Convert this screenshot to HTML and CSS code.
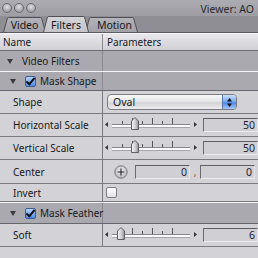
FILE: index.html
```html
<!DOCTYPE html>
<html>
<head>
    <title>Viewer: AO</title>
    <link rel="stylesheet" href="styles.css">
</head>
<body>
<div class="window">
    <div class="titlebar">
        <div class="lights"><span></span><span></span><span></span></div>
        <div class="title">Viewer: AO</div>
    </div>

    <div class="tabs">
        <div class="tab tab-video"><span>Video</span></div>
        <div class="tab tab-filters active"><span>Filters</span></div>
        <div class="tab tab-motion"><span>Motion</span></div>
    </div>

    <div class="sheet">
        <div class="row head">
            <div class="name">Name</div>
            <div class="param">Parameters</div>
        </div>

        <div class="row group top">
            <div class="name"><span class="tri"></span>Video Filters</div>
            <div class="param"></div>
        </div>

        <div class="row group">
            <div class="name sub"><span class="tri"></span><span class="check on"></span>Mask Shape</div>
            <div class="param"></div>
        </div>

        <div class="row item">
            <div class="name">Shape</div>
            <div class="param">
                <div class="popup">
                    <span class="popup-label">Oval</span>
                    <span class="popup-arrows">
                        <svg width="13" height="13" viewBox="0 0 13 13">
                            <polygon points="6.5,2 9,5.5 4,5.5" fill="#111"/>
                            <polygon points="6.5,11 9,7.5 4,7.5" fill="#111"/>
                        </svg>
                    </span>
                </div>
            </div>
        </div>

        <div class="row item">
            <div class="name">Horizontal Scale</div>
            <div class="param slider-cell">
                <svg class="slider" width="94" height="22" viewBox="0 0 94 22">
                    <use href="#slider-base"/>
                    <use href="#thumb" x="27"/>
                </svg>
                <div class="field">50</div>
            </div>
        </div>

        <div class="row item">
            <div class="name">Vertical Scale</div>
            <div class="param slider-cell">
                <svg class="slider" width="94" height="22" viewBox="0 0 94 22">
                    <use href="#slider-base"/>
                    <use href="#thumb" x="27"/>
                </svg>
                <div class="field">50</div>
            </div>
        </div>

        <div class="row item tall">
            <div class="name">Center</div>
            <div class="param center-cell">
                <svg class="plus" width="14" height="14" viewBox="0 0 14 14">
                    <defs>
                        <radialGradient id="knob" cx="50%" cy="40%" r="60%">
                            <stop offset="0" stop-color="#f4f4f6"/>
                            <stop offset="1" stop-color="#b4b4ba"/>
                        </radialGradient>
                    </defs>
                    <circle cx="7" cy="7" r="6.2" fill="url(#knob)" stroke="#6c6c72" stroke-width="0.9"/>
                    <path d="M7 3.6v6.8M3.6 7h6.8" stroke="#222" stroke-width="1.1"/>
                </svg>
                <div class="field short">0</div>
                <span class="comma">,</span>
                <div class="field">0</div>
            </div>
        </div>

        <div class="row item small">
            <div class="name">Invert</div>
            <div class="param"><span class="box"></span></div>
        </div>

        <div class="row group lit">
            <div class="name sub"><span class="tri"></span><span class="check on"></span>Mask Feather</div>
            <div class="param"></div>
        </div>

        <div class="row item">
            <div class="name">Soft</div>
            <div class="param slider-cell">
                <svg class="slider" width="94" height="22" viewBox="0 0 94 22">
                    <use href="#slider-base"/>
                    <use href="#thumb" x="13"/>
                </svg>
                <div class="field">6</div>
            </div>
        </div>
    </div>
</div>

<!-- shared slider parts -->
<svg width="0" height="0" class="defs">
    <defs>
        <linearGradient id="thumbfill" x1="0" x2="1" y1="0" y2="0">
            <stop offset="0" stop-color="#f6f6f8"/>
            <stop offset="0.5" stop-color="#d4d4d8"/>
            <stop offset="1" stop-color="#8e8e94"/>
        </linearGradient>
        <g id="slider-base">
            <polygon points="1,10.5 4,8 4,13" fill="#333"/>
            <rect x="8" y="10" width="78" height="1" fill="#86868c"/>
            <rect x="8" y="11" width="78" height="2" fill="#fbfbfb"/>
            <rect x="8" y="13" width="78" height="1" fill="#a4a4aa"/>
            <rect x="18" y="7" width="1" height="3" fill="#555"/>
            <rect x="28" y="4" width="1" height="6" fill="#555"/>
            <rect x="38" y="7" width="1" height="3" fill="#555"/>
            <rect x="48" y="4" width="1" height="6" fill="#555"/>
            <rect x="58" y="7" width="1" height="3" fill="#555"/>
            <rect x="68" y="4" width="1" height="6" fill="#555"/>
            <polygon points="93,10.5 90,8 90,13" fill="#333"/>
        </g>
        <g id="thumb">
            <polygon points="0.5,15.5 0.5,7 4,3.5 7.5,7 7.5,15.5" fill="url(#thumbfill)" stroke="#5e5e64" stroke-width="1"/>
        </g>
    </defs>
</svg>
</body>
</html>
```

FILE: styles.css
```css
body {
    margin: 0;
    width: 258px;
    height: 258px;
    overflow: hidden;
    background-color: #d3d3d7;
    font-family: "Noto Sans", "DejaVu Sans", sans-serif;
    font-size: 10px;
    color: #18181c;
}

.window {
    width: 258px;
}

.titlebar {
    height: 16px;
    display: flex;
    align-items: center;
    justify-content: space-between;
    padding: 0 4px 0 2px;
    background: linear-gradient(#acacb2, #9d9da3);
}

.lights {
    display: flex;
    gap: 2px;
}

.lights span {
    width: 8px;
    height: 8px;
    border-radius: 50%;
    border: 1px solid #6a6a70;
    background: radial-gradient(circle at 50% 35%, #e0e0e4, #a2a2a8 70%);
}

.title {
    font-size: 10.5px;
    color: #2a2a2e;
    padding-top: 1px;
}

.tabs {
    height: 16px;
    display: flex;
    align-items: flex-end;
    padding-left: 3px;
    background-color: #8e8e94;
}

.tab {
    position: relative;
    height: 15px;
    font-size: 10.5px;
    background-color: #4e4e54;
    clip-path: polygon(0 100%, 4px 1px, 6px 0, calc(100% - 6px) 0, calc(100% - 4px) 1px, 100% 100%);
}

.tab span {
    display: flex;
    height: 100%;
    align-items: center;
    justify-content: center;
    padding-top: 1px;
    box-sizing: border-box;
    background: linear-gradient(#b4b4ba, #a2a2a8);
    clip-path: polygon(1px 100%, 5px 1px, 7px 1px, calc(100% - 7px) 1px, calc(100% - 5px) 1px, calc(100% - 1px) 100%);
}

.tab-video {
    width: 43px;
    z-index: 2;
}

.tab-filters {
    width: 46px;
    height: 16px;
    margin-left: -3px;
    z-index: 3;
}

.tab-motion {
    width: 53px;
    margin-left: -4px;
    z-index: 1;
}

.tab-motion span {
    padding-left: 6px;
}

.tab.active span {
    background: linear-gradient(#d6d6da, #c4c4c9);
}

.sheet {
    border-top: 1px solid #5c5c62;
}

.row {
    display: grid;
    grid-template-columns: 103px 1fr;
    height: 22px;
    border-bottom: 1px solid #7a7a80;
}

.row .name {
    display: flex;
    align-items: center;
    padding-left: 13px;
    white-space: nowrap;
    border-right: 1px solid #7a7a80;
}

.row .param {
    display: flex;
    align-items: center;
}

.head {
    height: 16px;
    background: linear-gradient(#e8e8ec, #d0d0d5);
    border-top: 1px solid #f6f6f8;
    border-bottom: 1px solid #6c6c72;
}

.head .name {
    padding-left: 3px;
    border-right: 1px solid #8c8c92;
}

.head .param {
    padding-left: 4px;
}

.group {
    background-color: #a9a9af;
    border-top: 1px solid #f4f4f6;
    border-bottom: 1px solid #66666c;
    height: 18px;
}

.group.top {
    height: 20px;
    border-top: none;
    border-bottom: none;
}

.group.lit {
    height: 20px;
}

.group .name {
    padding-left: 7px;
    border-right-color: #8a8a90;
}

.group .name.sub {
    padding-left: 10px;
}

.tri {
    flex: none;
    width: 0;
    height: 0;
    border-left: 3.5px solid transparent;
    border-right: 3.5px solid transparent;
    border-top: 5px solid #3a3a40;
    margin-right: 9px;
}

.check {
    flex: none;
    width: 9px;
    height: 9px;
    margin-right: 4px;
    border: 1px solid #3d5e98;
    border-radius: 2px;
    background: linear-gradient(#b8d4f8, #4a8ae4);
    position: relative;
}

.check.on::after {
    content: "";
    position: absolute;
    left: 2px;
    top: -1px;
    width: 3px;
    height: 7px;
    border-right: 2px solid #101018;
    border-bottom: 2px solid #101018;
    transform: rotate(40deg);
}

.item {
    background-color: #d3d3d7;
}

.item.tall {
    height: 23px;
}

.item.small {
    height: 17px;
}

.popup {
    display: flex;
    align-items: center;
    width: 128px;
    height: 14px;
    margin-left: 4px;
    border: 1px solid #7c7c82;
    border-radius: 4px;
    background: linear-gradient(#fafafa, #e2e2e4 50%, #d4d4d6 55%, #ececee);
    overflow: hidden;
}

.popup-label {
    flex: 1;
    padding-left: 5px;
    font-size: 10.5px;
}

.popup-arrows {
    display: flex;
    justify-content: center;
    align-items: center;
    width: 13px;
    height: 100%;
    border-left: 1px solid #5a7bb0;
    background: linear-gradient(#cfe1fb, #6fa2ee 50%, #4f8ae6 55%, #a6c8f6);
}

.slider-cell {
    gap: 5px;
}

.slider {
    margin-left: 1px;
    margin-top: -1px;
}

.field {
    width: 51px;
    height: 12px;
    border-top: 1px solid #5e5e64;
    border-left: 1px solid #6a6a70;
    border-right: 1px solid #e6e6ea;
    border-bottom: 1px solid #ececf0;
    background-color: #d0d0d4;
    text-align: right;
    padding-right: 2px;
    font-size: 10.5px;
    line-height: 12px;
    color: #1c1c34;
}

.center-cell {
    padding-left: 11px;
}

.plus {
    margin-right: 7px;
}

.field.short {
    width: 51px;
}

.comma {
    width: 10px;
    text-align: center;
    color: #7a5a20;
}

.box {
    width: 9px;
    height: 9px;
    margin-left: 3px;
    border: 1px solid #7c7c82;
    border-radius: 2px;
    background: linear-gradient(#ffffff, #e2e2e6);
}

.defs {
    position: absolute;
}
```
